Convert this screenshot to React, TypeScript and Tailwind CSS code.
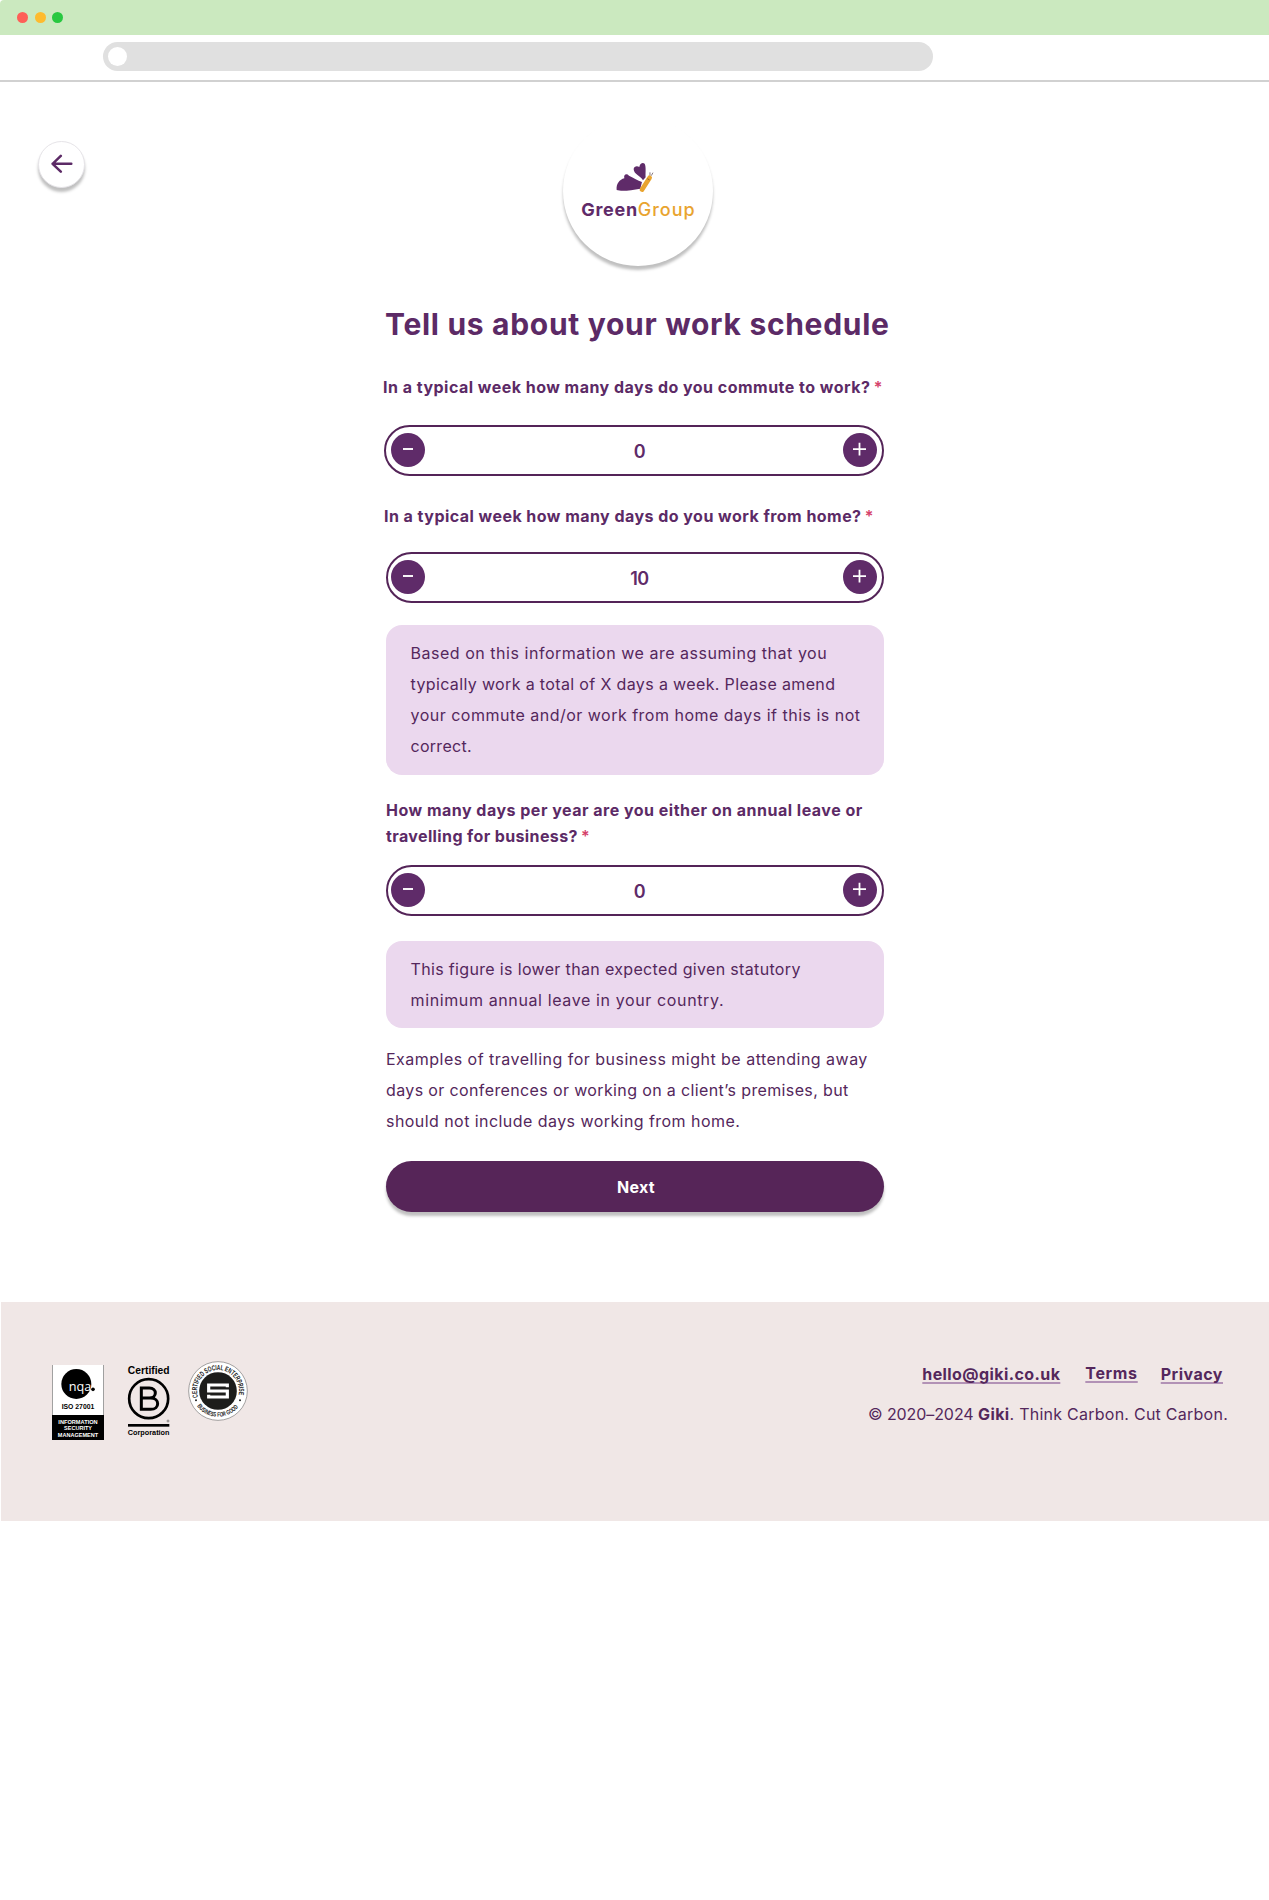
import type { ReactNode } from "react";

function BrowserChrome() {
  return (
    <div>
      <div className="flex h-[35px] items-center gap-[6.5px] rounded-tl-[4px] bg-[#cbe9bf] pl-[17px]">
        <span className="size-[11px] rounded-full bg-[#fe5f57]" />
        <span className="size-[11px] rounded-full bg-[#febb2e]" />
        <span className="size-[11px] rounded-full bg-[#28c840]" />
      </div>
      <div className="flex h-[47px] items-start border-b-2 border-[#d1d1d1] pt-[7px] pl-[103px]">
        <div className="flex h-[29px] w-[830px] items-center rounded-full bg-[#e0e0e0] pl-[5px]">
          <span className="size-[19px] rounded-full bg-white" />
        </div>
      </div>
    </div>
  );
}

function BackButton() {
  return (
    <button className="mt-[59px] ml-[38px] flex size-[47px] shrink-0 items-center justify-center rounded-full border border-[#e6e4e8] bg-white shadow-[0_4px_3px_rgba(0,0,0,0.25)]">
      <svg className="-mt-px" width="22" height="20" viewBox="0 0 22 20" fill="none" stroke="#5c2a66" strokeWidth="2.5" strokeLinecap="round" strokeLinejoin="round">
        <path d="M20.3 9.8H1.6M9.8 1.9 1.6 9.8l8.2 7.9" />
      </svg>
    </button>
  );
}

function Logo() {
  return (
    <div className="mx-auto mt-[34px] flex size-[150px] flex-col items-center rounded-full bg-white pt-[44px] shadow-[0_4px_3px_rgba(0,0,0,0.25)]">
      <svg className="mr-[6px]" width="43.3" height="35" viewBox="100 30 130 105">
        <g fill="#5f2b69">
          <path d="M187 96C174 91 163 84 148 77 142 70 131 72 134 85 120 89 109 101 111 120 126 125 154 121 182 116Z" />
          <path d="M190 91C184 78 162 73 162 57 163 49 172 47 179 51 181 40 189 37 195 41 200 50 197 70 198 82Z" />
        </g>
        <path d="M210 83 187 119" stroke="#e9a42f" strokeWidth="14" strokeLinecap="round" />
        <path d="M211 76V67M215 77l5-9" stroke="#4a3540" strokeWidth="2" fill="none" />
        <path d="M203 86l7 4" stroke="#6b4a2a" strokeWidth="2" />
      </svg>
      <div className="mt-px ml-[1px] flex text-lg leading-7">
        <span className="font-bold tracking-[0.68px] text-[#5f2b69]">Green</span>
        <span className="font-medium tracking-[1px] text-[#e9a42f]">Group</span>
      </div>
    </div>
  );
}

function Question({ className, children }: { className: string; children: ReactNode }) {
  return <div className={`text-base leading-[26px] font-bold whitespace-nowrap text-[#5c2a66] ${className}`}>{children}</div>;
}

function Required() {
  return <span className="-ml-px font-semibold tracking-normal text-[#d5416a]">*</span>;
}

function Stepper({ value, wide }: { value: string; wide?: boolean }) {
  return (
    <div
      className={`flex h-[51px] items-start rounded-full border-2 border-[#542458] pt-[6px] pr-[5px] ${
        wide ? "-ml-[2px] w-[500px] pl-[5px]" : "w-[498px] pl-[3px]"
      }`}
    >
      <button className="flex size-[34px] items-center justify-center rounded-full bg-[#5f2b69]">
        <svg width="34" height="34" viewBox="0 0 34 34" stroke="white" strokeWidth="1.9">
          <path d="M12 16h10" />
        </svg>
      </button>
      <span className="flex-1 pt-[5px] pl-[11px] text-center text-lg leading-7 font-semibold tracking-[-0.6px] text-[#5f2b69]">{value}</span>
      <button className="flex size-[34px] items-center justify-center rounded-full bg-[#5f2b69]">
        <svg width="34" height="34" viewBox="0 0 34 34" stroke="white" strokeWidth="1.8">
          <path d="M10 16.2h13M16.5 9.8v12.8" />
        </svg>
      </button>
    </div>
  );
}

function Note({ className, children }: { className: string; children: ReactNode }) {
  return (
    <div className={`w-[498px] rounded-2xl bg-[#ebd8ee] pl-[24.5px] text-base leading-[31px] whitespace-nowrap text-[#54275c] ${className}`}>
      {children}
    </div>
  );
}

function NqaBadge() {
  return (
    <svg width="52" height="75" viewBox="0 0 156 225" fontFamily="Liberation Sans, sans-serif" fontWeight="bold" textAnchor="middle">
      <rect width="156" height="225" fill="#fff" />
      <path d="M1 0v150M155 0v150" stroke="#555" strokeWidth="2" />
      <circle cx="73" cy="57" r="45" fill="#000" />
      <circle cx="123" cy="73" r="5.5" fill="#000" />
      <text x="84" y="77" fontSize="38" fontFamily="Open Sans, sans-serif" fontWeight="normal" fill="#fff">nqa</text>
      <text x="78" y="132" fontSize="20" textLength="98" lengthAdjust="spacingAndGlyphs">ISO 27001</text>
      <rect y="150" width="156" height="75" fill="#000" />
      <g fill="#fff" fontSize="18">
        <text x="78" y="176" textLength="118" lengthAdjust="spacingAndGlyphs">INFORMATION</text>
        <text x="78" y="196" textLength="84" lengthAdjust="spacingAndGlyphs">SECURITY</text>
        <text x="78" y="216" textLength="121" lengthAdjust="spacingAndGlyphs">MANAGEMENT</text>
      </g>
    </svg>
  );
}

function BCorpBadge() {
  return (
    <svg width="44" height="73" viewBox="0 0 132 219" fontFamily="Liberation Sans, sans-serif" fontWeight="bold" textAnchor="middle">
      <text x="68" y="28" fontSize="30" textLength="125" lengthAdjust="spacingAndGlyphs">Certified</text>
      <circle cx="68" cy="101" r="58.5" fill="none" stroke="#000" strokeWidth="8" />
      <path d="M46 69h24c24 0 24 30 0 30H46zM46 99h28c28 0 28 34 0 34H46z" fill="none" stroke="#000" strokeWidth="9" />
      <circle cx="126" cy="168" r="3" fill="none" stroke="#333" strokeWidth="1.5" />
      <rect x="6" y="177" width="124" height="8" />
      <text x="68" y="211" fontSize="22" textLength="125" lengthAdjust="spacingAndGlyphs">Corporation</text>
    </svg>
  );
}

function SocialEnterpriseBadge() {
  return (
    <svg width="60" height="60" viewBox="-90 -90 180 180" fontFamily="Liberation Sans, sans-serif" fontWeight="bold">
      <defs>
        <path id="sealTop" d="M-60.2 18.4A63 63 0 1 1 60.2 18.4" />
        <path id="sealBottom" d="M-63 45A77.5 77.5 0 0 0 63 45" />
      </defs>
      <circle r="88" fill="#fff" stroke="#777" strokeWidth="2" />
      <circle r="56.5" fill="#1d1d1b" />
      <text fontSize="22" fill="#222" textLength="228" lengthAdjust="spacingAndGlyphs">
        <textPath href="#sealTop" textLength="228" lengthAdjust="spacingAndGlyphs">CERTIFIED SOCIAL ENTERPRISE</textPath>
      </text>
      <text fontSize="19" fill="#222" textLength="143" lengthAdjust="spacingAndGlyphs">
        <textPath href="#sealBottom" textLength="143" lengthAdjust="spacingAndGlyphs">BUSINESS FOR GOOD</textPath>
      </text>
      <circle cx="-66" cy="28" r="3" fill="#222" />
      <circle cx="66" cy="28" r="3" fill="#222" />
      <path d="M28-11V-18H-28V0H28V18H-28V11" fill="none" stroke="#fff" strokeWidth="9.5" />
    </svg>
  );
}

function FooterLink({ className, children }: { className: string; children: ReactNode }) {
  return (
    <a
      href="#"
      className={`font-bold underline decoration-[#b292b6] decoration-2 underline-offset-[2px] [text-decoration-skip-ink:none] ${className}`}
    >
      {children}
    </a>
  );
}

function Footer() {
  return (
    <footer className="mt-[90px] ml-px flex h-[219px] items-start bg-[#f0e7e6]">
      <div className="flex items-start pt-[63px] pl-[51px]">
        <NqaBadge />
        <div className="ml-[22px]"><BCorpBadge /></div>
        <div className="-mt-[4px] ml-[18px]"><SocialEnterpriseBadge /></div>
      </div>
      <div className="ml-auto pr-[41px] text-base whitespace-nowrap text-[#54275c]">
        <div className="mt-[60px] flex justify-end pr-[5px] leading-[24px]">
          <FooterLink className="tracking-[0.41px]">hello@giki.co.uk</FooterLink>
          <FooterLink className="-mt-px ml-[25px] tracking-[0.65px]">Terms</FooterLink>
          <FooterLink className="ml-[23px] tracking-[0.49px]">Privacy</FooterLink>
        </div>
        <p className="mt-[16px] leading-[24px]">
          <span className="tracking-[-0.08px]">© 2020–2024 </span>
          <b className="tracking-[0.4px]">Giki</b>
          <span className="tracking-[0.25px]">. Think Carbon. Cut Carbon.</span>
        </p>
      </div>
    </footer>
  );
}

export default function App() {
  return (
    <div className="min-h-[1900px] bg-white font-[Inter,sans-serif]">
      <BrowserChrome />
      <div className="grid h-[184px] grid-cols-[386px_504px_1fr] items-start">
        <BackButton />
        <Logo />
      </div>
      <main className="ml-[386px] w-[504px]">
        <h1 className="mt-[38px] -ml-px text-[30px] leading-[40px] font-bold tracking-[0.7px] whitespace-nowrap text-[#5c2a66]">
          Tell us about your work schedule
        </h1>
        <Question className="mt-[30px] -ml-[3px]">
          <span className="tracking-[0.48px]">In a typical week how many days do you commute to work? </span>
          <Required />
        </Question>
        <div className="mt-[25px]"><Stepper value="0" wide /></div>
        <Question className="mt-[27px] -ml-[2px]">
          <span className="tracking-[0.46px]">In a typical week how many days do you work from home? </span>
          <Required />
        </Question>
        <div className="mt-[23px]"><Stepper value="10" /></div>
        <Note className="mt-[22px] py-[13px]">
          <p className="tracking-[0.53px]">Based on this information we are assuming that you</p>
          <p className="tracking-[0.36px]">typically work a total of X days a week. Please amend</p>
          <p className="tracking-[0.49px]">your commute and/or work from home days if this is not</p>
          <p className="tracking-[0.28px]">correct.</p>
        </Note>
        <Question className="mt-[22px]">
          <p className="tracking-[0.49px]">How many days per year are you either on annual leave or</p>
          <p>
            <span className="tracking-[0.38px]">travelling for business? </span>
            <Required />
          </p>
        </Question>
        <div className="mt-[16px]"><Stepper value="0" /></div>
        <Note className="mt-[25px] py-[12.5px]">
          <p className="tracking-[0.34px]">This figure is lower than expected given statutory</p>
          <p className="tracking-[0.62px]">minimum annual leave in your country.</p>
        </Note>
        <div className="mt-[16px] text-base leading-[31px] whitespace-nowrap text-[#54275c]">
          <p className="tracking-[0.48px]">Examples of travelling for business might be attending away</p>
          <p className="tracking-[0.37px]">days or conferences or working on a client’s premises, but</p>
          <p className="tracking-[0.44px]">should not include days working from home.</p>
        </div>
        <button className="mt-[24px] block h-[51px] w-[498px] rounded-full bg-[#562558] pt-px pl-[2px] text-base font-bold tracking-[0.35px] text-white shadow-[0_4px_3px_rgba(0,0,0,0.25)]">
          Next
        </button>
      </main>
      <Footer />
    </div>
  );
}
